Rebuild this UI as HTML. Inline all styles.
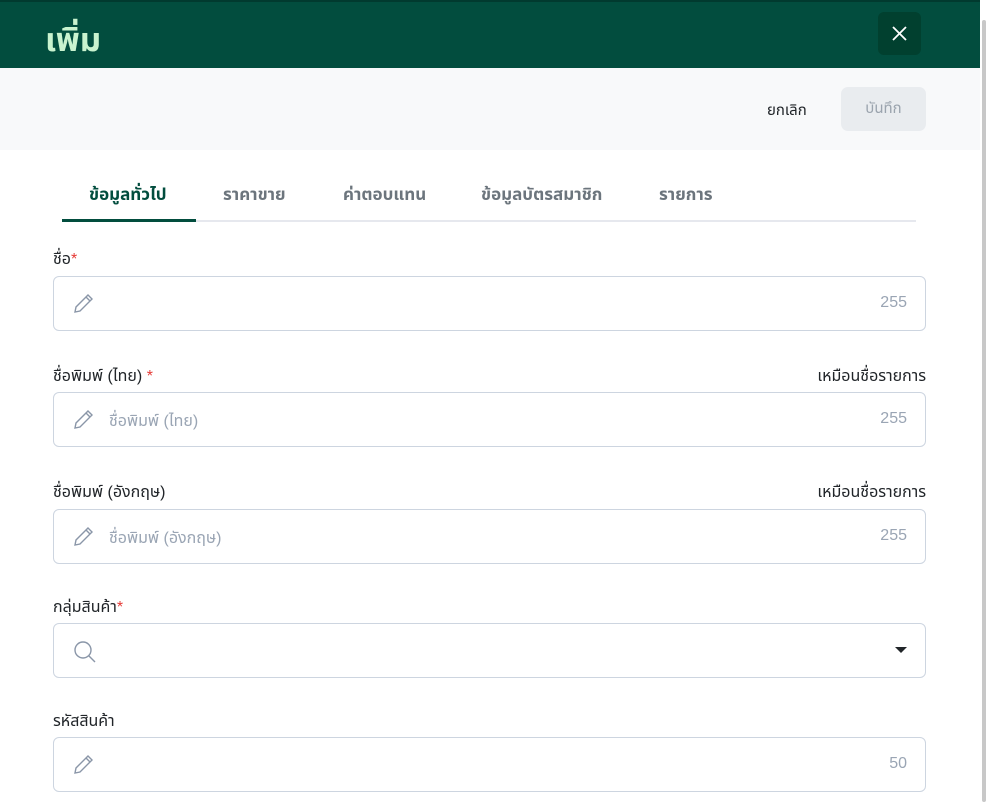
<!DOCTYPE html>
<html><head><meta charset="utf-8"><style>
*{box-sizing:border-box;margin:0;padding:0}
body{width:989px;height:802px;overflow:hidden;background:#fff;font-family:"Liberation Sans","Noto Sans Thai","Tahoma",sans-serif;position:relative}
.hdr{position:absolute;left:0;top:0;width:980px;height:68px;background:#024d3e;border-top:2px solid #013a2f}
.title{position:absolute;left:45px;top:14px;font-size:33px;color:#c9f3cf;font-weight:bold}
.close{position:absolute;left:878px;top:10px;width:43px;height:43px;background:#01402f;border-radius:6px}
.bar{position:absolute;left:0;top:68px;width:980px;height:82px;background:#f8f9fa}
.cancel{position:absolute;left:767px;top:31px;font-size:15px;color:#212529}
.save{position:absolute;left:841px;top:19px;width:85px;height:44px;background:#e9ecef;border-radius:7px;color:#9aa3ad;font-size:15px;text-align:center;line-height:44px}
.tabs{position:absolute;left:62px;top:220px;width:854px;height:2px;background:#e6e8ee}
.tabs i{position:absolute;left:0;top:-1px;width:134px;height:3px;background:#024d3e}
.tab{position:absolute;top:182px;font-size:17px;color:#6c757d;font-weight:bold}
.lab{position:absolute;left:53px;font-size:16px;color:#212529}
.lab b{color:#e53935;font-weight:normal}
.same{position:absolute;right:63px;font-size:16px;color:#212529}
.inp{position:absolute;left:53px;width:873px;height:55px;border:1px solid #cdd5e0;border-radius:6px}
.inp svg{position:absolute;left:18px;top:15px}
.ph{position:absolute;left:55px;top:17px;font-size:16px;color:#9aa5b4}
.cnt{position:absolute;right:18px;top:17px;font-size:16px;color:#9aa5b4}
.scroll{position:absolute;left:980px;top:0;width:9px;height:802px;background:#fff}
.scroll i{position:absolute;left:2px;top:20px;width:4px;height:782px;background:#c8c8c8;border-radius:2px}
</style></head><body>
<div class="hdr"><div class="title">เพิ่ม</div>
<div class="close"><svg width="43" height="43"><path d="M15 15L28 28M28 15L15 28" stroke="#fff" stroke-width="1.8"/></svg></div></div>
<div class="bar"><div class="cancel">ยกเลิก</div><div class="save">บันทึก</div></div>
<div class="tab" style="left:89px;color:#024d3e">ข้อมูลทั่วไป</div>
<div class="tab" style="left:223px">ราคาขาย</div>
<div class="tab" style="left:343px">ค่าตอบแทน</div>
<div class="tab" style="left:481px">ข้อมูลบัตรสมาชิก</div>
<div class="tab" style="left:659px">รายการ</div>
<div class="tabs"><i></i></div>

<div class="lab" style="top:248px">ชื่อ<b>*</b></div>
<div class="inp" style="top:276px"><svg width="24" height="24" viewBox="0 0 24 24"><path d="M16 3l4 4L8 19l-5 1 1-5z M14 5l4 4" fill="none" stroke="#8a96a8" stroke-width="1.4"/></svg><div class="cnt">255</div></div>

<div class="lab" style="top:365px">ชื่อพิมพ์ (ไทย) <b>*</b></div><div class="same" style="top:365px">เหมือนชื่อรายการ</div>
<div class="inp" style="top:392px"><svg width="24" height="24" viewBox="0 0 24 24"><path d="M16 3l4 4L8 19l-5 1 1-5z M14 5l4 4" fill="none" stroke="#8a96a8" stroke-width="1.4"/></svg><div class="ph">ชื่อพิมพ์ (ไทย)</div><div class="cnt">255</div></div>

<div class="lab" style="top:481px">ชื่อพิมพ์ (อังกฤษ)</div><div class="same" style="top:481px">เหมือนชื่อรายการ</div>
<div class="inp" style="top:509px"><svg width="24" height="24" viewBox="0 0 24 24"><path d="M16 3l4 4L8 19l-5 1 1-5z M14 5l4 4" fill="none" stroke="#8a96a8" stroke-width="1.4"/></svg><div class="ph">ชื่อพิมพ์ (อังกฤษ)</div><div class="cnt">255</div></div>

<div class="lab" style="top:596px">กลุ่มสินค้า<b>*</b></div>
<div class="inp" style="top:623px"><svg width="26" height="26" viewBox="0 0 26 26"><circle cx="11" cy="11" r="8" fill="none" stroke="#8a96a8" stroke-width="1.4"/><path d="M17 17l6 6" stroke="#8a96a8" stroke-width="1.4"/></svg><svg style="left:auto;right:18px;top:22px" width="12" height="8"><path d="M0 1h12L6 7z" fill="#212529"/></svg></div>

<div class="lab" style="top:710px">รหัสสินค้า</div>
<div class="inp" style="top:737px"><svg width="24" height="24" viewBox="0 0 24 24"><path d="M16 3l4 4L8 19l-5 1 1-5z M14 5l4 4" fill="none" stroke="#8a96a8" stroke-width="1.4"/></svg><div class="cnt">50</div></div>
<div class="scroll"><i></i></div>
</body></html>
